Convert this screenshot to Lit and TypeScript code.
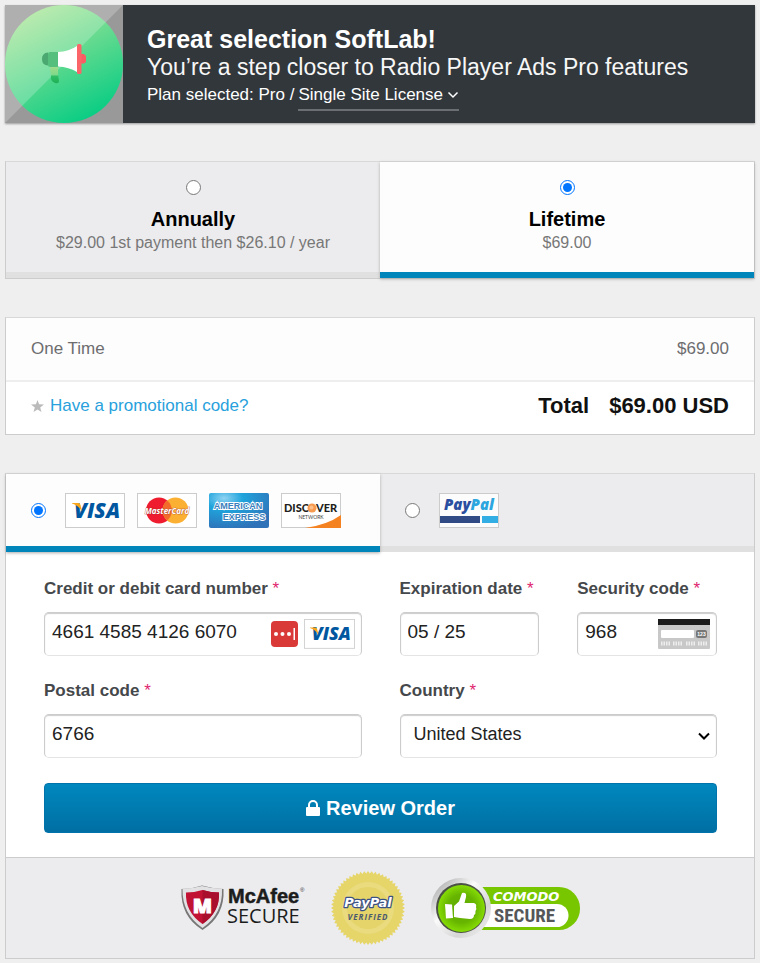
import { LitElement, html, svg, css } from "lit";
import { customElement, property, state } from "lit/decorators.js";
import { classMap } from "lit/directives/class-map.js";

type Brand = "visa" | "mastercard" | "amex" | "discover" | "paypal";

const brandArt = {
  visa: svg`
    <rect x="0.5" y="0.5" width="59" height="34" fill="#fff" stroke="#ccc" />
    <text x="9" y="25" font-family="Open Sans, sans-serif" font-weight="800" font-style="italic" font-size="21" fill="#00579f">VISA</text>
    <path d="M7 10H13.500Q15 10 15.500 12L17 18.500Q13.500 12.500 7 10.600Z" fill="#faa61a" />`,
  mastercard: svg`
    <rect x="0.5" y="0.5" width="59" height="34" fill="#fff" stroke="#ccc" />
    <circle cx="22" cy="17.500" r="13" fill="#ee1c2e" />
    <circle cx="38.500" cy="17.500" r="13" fill="#fbb034" />
    <path d="M30.200 7.500a13 13 0 0 1 0 20a13 13 0 0 1 0-20Z" fill="#f26b2b" />
    <text x="30" y="21" text-anchor="middle" font-family="Open Sans, sans-serif" font-weight="700" font-style="italic" font-size="8" fill="#fff" stroke="#a5342a" stroke-width="0.600" paint-order="stroke">MasterCard</text>`,
  amex: svg`
    <defs>
      <radialGradient id="amex" cx="0.25" cy="0.15" r="0.9">
        <stop offset="0" stop-color="#8fd3f3" />
        <stop offset="0.35" stop-color="#1fa4dc" />
        <stop offset="1" stop-color="#2f72b8" />
      </radialGradient>
    </defs>
    <rect width="60" height="35" rx="2" fill="url(#amex)" />
    <g text-anchor="middle" font-family="Liberation Sans, sans-serif" font-weight="700" font-size="9" fill="#3a80bd" stroke="#fff" stroke-width="1.800" paint-order="stroke">
      <text x="29" y="16">AMERICAN</text>
      <text x="35" y="27">EXPRESS</text>
    </g>`,
  discover: svg`
    <rect x="0.5" y="0.5" width="59" height="34" fill="#fff" stroke="#ccc" />
    <path d="M24 35Q46 32 60 22V35Z" fill="#f58220" />
    <g font-family="Lato, sans-serif" font-weight="900" font-size="11" fill="#231f20">
      <text x="3" y="19">DISC</text>
      <text x="35" y="19">VER</text>
    </g>
    <circle cx="31" cy="15" r="4.500" fill="#f79a4e" />
    <circle cx="30.500" cy="14.500" r="2" fill="#fbbf8c" />
    <text x="30" y="26" text-anchor="middle" font-family="Lato, sans-serif" font-size="5" fill="#444">NETWORK</text>`,
  paypal: svg`
    <rect x="0.5" y="0.5" width="59" height="34" fill="#fcfcfc" stroke="#ccc" />
    <text x="5" y="17" font-family="Open Sans, sans-serif" font-weight="800" font-style="italic" font-size="15" fill="#2a4fa0">Pay<tspan fill="#2ba6de">Pal</tspan></text>
    <rect x="1" y="23" width="40" height="7" fill="#314b87" />
    <rect x="43" y="23" width="16" height="7" fill="#32aee4" />`,
};

@customElement("brand-card")
export class BrandCard extends LitElement {
  @property() brand: Brand = "visa";
  @property() label = "";

  static styles = css`
    :host { display: block; width: 60px; }
    .art { display: block; width: 100%; height: auto; }
  `;

  render() {
    return html`<svg class="art" viewBox="0 0 60 35" role="img" aria-label=${this.label}>${brandArt[this.brand]}</svg>`;
  }
}

const sealEdge = Array.from({ length: 120 }, (_, i) => {
  const radius = i % 2 ? 34.5 : 37;
  const angle = (i * Math.PI) / 60;
  return `${(37 + radius * Math.cos(angle)).toFixed(2)},${(37 + radius * Math.sin(angle)).toFixed(2)}`;
}).join(" ");

@customElement("app-root")
export class AppRoot extends LitElement {
  @state() private plan = "lifetime";
  @state() private method = "card";

  static styles = css`
    :host {
      display: block;
      min-height: 100vh;
      box-sizing: border-box;
      padding: 5px 5px 4px;
      background: #efefef;
      color: #000;
      font-family: "Liberation Sans", Arial, sans-serif;
    }
    * { box-sizing: border-box; }
    .page { display: flex; flex-direction: column; gap: 38px; }
    h1, p { margin: 0; }
    svg { display: block; flex: none; overflow: visible; }

    .banner {
      display: flex;
      background: #32373c;
      color: #fff;
      box-shadow: 0 1px 2px #999;
    }
    .intro { padding: 20px 24px 12px; }
    .title { font-size: 25px; line-height: 28px; font-weight: 700; }
    .lead { font-size: 23px; line-height: 28px; color: #f7f7f7; }
    .chosen { display: flex; gap: 4px; font-size: 17px; line-height: 28px; }
    .license {
      display: inline-flex;
      align-items: center;
      gap: 4px;
      border-bottom: 2px solid #6b6f73;
    }
    .license-select {
      appearance: none;
      border: 0;
      padding: 0;
      background: none;
      color: inherit;
      font: inherit;
    }

    .choices { display: grid; grid-template-columns: 1fr 1fr; }
    .choice {
      background: #ececee;
      border-bottom: 6px solid #e0e0e0;
    }
    .choice.on {
      background: #fdfdfd;
      border-bottom-color: #0085ba;
      box-shadow: 0 1px 3px #aaa;
    }
    .plans { border: 1px solid #ccc; border-top-color: #d8d8d8; }
    .plan {
      display: flex;
      flex-direction: column;
      align-items: center;
      padding: 18px 8px 17px;
    }
    .radio { width: 15px; height: 15px; margin: 0; flex: none; }
    .plan-name { margin-top: 12px; font-size: 20px; line-height: 24px; font-weight: 700; }
    .plan-price { font-size: 16px; line-height: 24px; color: #777; }

    .panel {
      border: 1px solid #ccc;
      border-top-color: #d8d8d8;
      background: #fff;
    }
    .line {
      display: flex;
      justify-content: space-between;
      align-items: center;
      padding: 0 25px;
      font-size: 17px;
    }
    .item { height: 64px; background: #fdfdfd; border-bottom: 2px solid #eee; color: #6d6d70; }
    .sum { height: 52px; padding-bottom: 4px; }
    .promo { display: flex; align-items: center; gap: 6px; color: #28a1dc; text-decoration: none; }
    .total { display: flex; gap: 20px; font-size: 22px; font-weight: 700; color: #111; }

    .method {
      display: flex;
      align-items: center;
      gap: 12px;
      height: 78px;
      padding: 0 25px;
    }
    .method .radio { margin-right: 7px; }
    .method.on { position: relative; }

    .fields {
      display: grid;
      grid-template-columns: repeat(4, 1fr);
      gap: 25px 38px;
      padding: 27px 37px 24px 38px;
    }
    .field { display: flex; flex-direction: column; gap: 13px; min-width: 0; }
    .wide { grid-column: span 2; }
    .label { font-size: 17px; line-height: 20px; font-weight: 700; color: #45484b; white-space: nowrap; }
    .req { color: #e0246e; font-weight: 400; }
    .box {
      display: flex;
      align-items: center;
      height: 44px;
      border: 1px solid #ccc;
      border-bottom-color: #e4e4e4;
      border-radius: 5px;
      background: #fff;
      box-shadow: inset 0 1px 1px #ccc;
      padding-right: 6px;
    }
    .input, .select {
      flex: 1;
      min-width: 0;
      width: 100%;
      height: 100%;
      border: 0;
      background: none;
      appearance: none;
      color: #222;
      font-family: inherit;
    }
    .input { padding: 0 0 4px 7px; font-size: 19px; }
    .select { padding: 0 0 4px 13px; font-size: 18px; }
    .box.card-no { gap: 6px; }
    .small-card { width: 51px; }
    .review {
      grid-column: 1 / -1;
      display: flex;
      align-items: center;
      justify-content: center;
      gap: 6px;
      height: 50px;
      border: 1px solid #0073aa;
      border-radius: 4px;
      background: linear-gradient(#0088be, #006fa3);
      color: #fff;
      font: 700 20px/24px "Liberation Sans", Arial, sans-serif;
    }
    .trust {
      display: flex;
      justify-content: center;
      align-items: center;
      gap: 26px;
      height: 101px;
      border-top: 1px solid #ccc;
      background: #ececee;
    }
  `;

  private renderPlan(id: string, name: string, price: string) {
    return html`
      <label class=${classMap({ choice: true, plan: true, on: this.plan === id })}>
        <input class="radio" type="radio" name="plan" .checked=${this.plan === id} @change=${() => (this.plan = id)} />
        <span class="plan-name">${name}</span>
        <span class="plan-price">${price}</span>
      </label>`;
  }

  private renderMethod(id: string, cards: [Brand, string][]) {
    return html`
      <label class=${classMap({ choice: true, method: true, on: this.method === id })}>
        <input class="radio" type="radio" name="method" .checked=${this.method === id} @change=${() => (this.method = id)} />
        ${cards.map(([brand, label]) => html`<brand-card brand=${brand} label=${label}></brand-card>`)}
      </label>`;
  }

  private renderLabel(id: string, text: string) {
    return html`<label class="label" for=${id}>${text} <span class="req">*</span></label>`;
  }

  private renderLogo() {
    return html`
      <svg width="118" height="118" viewBox="0 0 118 118" aria-hidden="true">
        <defs>
          <linearGradient id="leaf" x1="0.2" y1="0" x2="0.7" y2="1">
            <stop offset="0" stop-color="#b2e699" />
            <stop offset="1" stop-color="#05cc83" />
          </linearGradient>
          <linearGradient id="grip" x1="0" y1="0" x2="0" y2="1">
            <stop offset="0" stop-color="#a5dc8c" />
            <stop offset="0.5" stop-color="#7fd98a" />
            <stop offset="0.6" stop-color="#2fbd66" />
            <stop offset="1" stop-color="#1fb055" />
          </linearGradient>
        </defs>
        <rect width="118" height="118" fill="#999" />
        <circle cx="59" cy="59" r="59" fill="url(#leaf)" />
        <path d="M0 0H118L0 118Z" fill="#fff" opacity="0.22" />
        <path d="M45 61H53V69L54 76Q54 79 50 78Q45 76 46 71Z" fill="url(#grip)" />
        <path d="M43 47.500Q37 48 37 54T43 60.500Z" fill="#4aa870" />
        <path d="M45 47H54V62H45Q43 62 43 60V49Q43 47 45 47Z" fill="#55c07e" />
        <path d="M76 49H79L81 51V57L79 58.500H76Z" fill="#fa5c64" />
        <rect x="72" y="39" width="4.500" height="30" rx="1.500" fill="#fb6468" />
        <path d="M53 47Q64 46.500 72 41V67Q64 62 53 61.500Z" fill="#fff" />
      </svg>`;
  }

  private renderBadges() {
    return html`
      <svg width="124" height="46" viewBox="0 0 124 46" role="img" aria-label="McAfee Secure">
        <path d="M0.500 4Q12 3.500 21 0.500Q31 3.500 42.500 4Q44 31 21.500 45Q-1 31 0.500 4Z" fill="#777" />
        <path d="M1.500 3.500Q12 3.500 21 1Q31 3.500 41 3.500Q42 29 21.500 43Q1 29 1.500 3.500Z" fill="#e2e2e4" />
        <path d="M5 7.500Q13 7.500 21.500 5Q30 7.500 38 7.500Q39 27 21.500 39Q4 27 5 7.500Z" fill="#c21234" />
        <path d="M21.500 5Q30 7.500 38 7.500Q39 27 21.500 39Z" fill="#a90f2d" />
        <text x="21.500" y="28" text-anchor="middle" font-family="Open Sans, sans-serif" font-weight="800" font-size="20" fill="#fff" stroke="#fff">M</text>
        <text x="47" y="18" font-family="Liberation Sans, sans-serif" font-weight="700" font-size="20" fill="#1c1c1c" stroke="#1c1c1c" stroke-width="0.500">McAfee</text>
        <text x="119" y="7" font-family="Liberation Sans, sans-serif" font-size="6" fill="#333">®</text>
        <text x="46" y="38" font-family="Open Sans, sans-serif" font-size="20" fill="#1c1c1c">SECURE</text>
      </svg>
      <svg width="74" height="74" viewBox="0 0 74 74" role="img" aria-label="PayPal Verified">
        <polygon points=${sealEdge} fill="#e6d569" />
        <circle cx="37" cy="37" r="26" fill="#e9db7e" />
        <circle cx="37" cy="37" r="21" fill="#e5d46a" />
        <text x="37" y="36" text-anchor="middle" font-family="DejaVu Sans, sans-serif" font-weight="700" font-style="italic" font-size="13" fill="#fff" stroke="#3b5084" stroke-width="2.500" stroke-linejoin="round" paint-order="stroke">PayPal</text>
        <text x="37" y="49" text-anchor="middle" font-family="Open Sans, sans-serif" font-weight="700" font-style="italic" font-size="8" letter-spacing="1" fill="#4c5a70">VERIFIED</text>
      </svg>
      <svg width="149" height="62" viewBox="0 0 149 62" role="img" aria-label="Comodo Secure">
        <defs>
          <linearGradient id="rim" x1="0" y1="0" x2="1" y2="1">
            <stop offset="0" stop-color="#9a9a9a" />
            <stop offset="0.4" stop-color="#fafafa" />
            <stop offset="0.7" stop-color="#d6d6d6" />
            <stop offset="1" stop-color="#f5f5f5" />
          </linearGradient>
          <radialGradient id="lime">
            <stop offset="0" stop-color="#5fa800" />
            <stop offset="0.6" stop-color="#67b500" />
            <stop offset="1" stop-color="#86dc05" />
          </radialGradient>
        </defs>
        <rect x="20" y="10" width="129" height="43" rx="21" fill="#78c600" />
        <path d="M40 27H126A11.500 11.500 0 0 1 126 50H40Z" fill="#fff" />
        <circle cx="30" cy="31" r="30" fill="url(#rim)" />
        <circle cx="30" cy="31" r="25" fill="#4b5145" />
        <circle cx="30.500" cy="31.500" r="23.500" fill="url(#lime)" />
        <path d="M14 27L21 27.500L22 41L15 41.500Z" fill="#fff" />
        <path d="M23 29L28 24.500L31 16Q36 15 35 20L33.500 26H43Q46 27 45 30Q46 32 44.500 34Q45 37 43 38Q43 42 39 42L29 41L23 40Z" fill="#fff" />
        <text x="62" y="24" font-family="DejaVu Sans, sans-serif" font-weight="700" font-style="italic" font-size="13" fill="#fff">COMODO</text>
        <text x="63" y="45" font-family="Liberation Sans Narrow, Roboto Condensed, Roboto, sans-serif" font-weight="700" font-size="19" fill="#555759">SECURE</text>
      </svg>`;
  }

  render() {
    return html`
      <main class="page">
        <header class="banner">
          ${this.renderLogo()}
          <div class="intro">
            <h1 class="title">Great selection SoftLab!</h1>
            <p class="lead">You’re a step closer to Radio Player Ads Pro features</p>
            <div class="chosen">
              <label for="license">Plan selected: Pro /</label>
              <span class="license">
                <select id="license" class="license-select"><option>Single Site License</option></select>
                <svg width="12" height="8" viewBox="0 0 12 8" aria-hidden="true"><path d="M1.500 1.500L6 6L10.500 1.500" fill="none" stroke="#fff" stroke-width="1.500" /></svg>
              </span>
            </div>
          </div>
        </header>

        <section class="choices plans">
          ${this.renderPlan("annual", "Annually", "$29.00 1st payment then $26.10 / year")}
          ${this.renderPlan("lifetime", "Lifetime", "$69.00")}
        </section>

        <section class="panel">
          <div class="line item"><span>One Time</span><span>$69.00</span></div>
          <div class="line sum">
            <a class="promo" href="#promo">
              <svg width="13" height="12" viewBox="0 0 13 12" aria-hidden="true"><path d="M6.500 0L8.100 4.300L13 4.500L9.200 7.400L10.500 12L6.500 9.400L2.500 12L3.800 7.400L0 4.500L4.900 4.300Z" fill="#bbb" /></svg>
              Have a promotional code?
            </a>
            <div class="total"><span>Total</span><span>$69.00 USD</span></div>
          </div>
        </section>

        <form class="panel" @submit=${(e: Event) => e.preventDefault()}>
          <div class="choices">
            ${this.renderMethod("card", [["visa", "Visa"], ["mastercard", "MasterCard"], ["amex", "American Express"], ["discover", "Discover"]])}
            ${this.renderMethod("paypal", [["paypal", "PayPal"]])}
          </div>
          <div class="fields">
            <div class="field wide">
              ${this.renderLabel("number", "Credit or debit card number")}
              <div class="box card-no">
                <input id="number" class="input" type="text" value="4661 4585 4126 6070" />
                <svg width="27" height="26" viewBox="0 0 27 26" aria-hidden="true">
                  <rect width="27" height="26" rx="4" fill="#d93a38" />
                  <g fill="#fff"><circle cx="5" cy="13" r="2" /><circle cx="11.500" cy="13" r="2" /><circle cx="18" cy="13" r="2" /><rect x="22.500" y="7" width="1.500" height="12" /></g>
                </svg>
                <brand-card class="small-card" brand="visa" label="Visa"></brand-card>
              </div>
            </div>
            <div class="field">
              ${this.renderLabel("expiry", "Expiration date")}
              <div class="box"><input id="expiry" class="input" type="text" value="05 / 25" /></div>
            </div>
            <div class="field">
              ${this.renderLabel("cvc", "Security code")}
              <div class="box">
                <input id="cvc" class="input" type="text" value="968" />
                <svg width="52" height="30" viewBox="0 0 52 30" aria-hidden="true">
                  <rect width="52" height="30" rx="1" fill="#c8c8c8" />
                  <rect width="52" height="6" fill="#1c1c1c" />
                  <rect x="3" y="11" width="33" height="8" rx="1" fill="#fff" />
                  <rect x="38" y="11" width="11" height="8" rx="2" fill="#777" />
                  <text x="43.500" y="17" text-anchor="middle" font-family="Liberation Sans, sans-serif" font-weight="700" font-size="5" fill="#fff">123</text>
                  <path d="M3 24.500H12M15 24.500H24M28 24.500H37M40 24.500H49" stroke="#eee" stroke-width="4" stroke-dasharray="1.500 1" />
                </svg>
              </div>
            </div>
            <div class="field wide">
              ${this.renderLabel("postal", "Postal code")}
              <div class="box"><input id="postal" class="input" type="text" value="6766" /></div>
            </div>
            <div class="field wide">
              ${this.renderLabel("country", "Country")}
              <div class="box">
                <select id="country" class="select"><option>United States</option></select>
                <svg width="12" height="8" viewBox="0 0 12 8" aria-hidden="true"><path d="M1 1.500L6 6.500L11 1.500" fill="none" stroke="#000" stroke-width="2" /></svg>
              </div>
            </div>
            <button class="review" type="submit">
              <svg width="14" height="16" viewBox="0 0 14 16" aria-hidden="true"><path d="M3 8V5a4 4 0 0 1 8 0V8" fill="none" stroke="#fff" stroke-width="2" /><rect y="7" width="14" height="9" rx="1" fill="#fff" /></svg>
              Review Order
            </button>
          </div>
          <footer class="trust">${this.renderBadges()}</footer>
        </form>
      </main>`;
  }
}
